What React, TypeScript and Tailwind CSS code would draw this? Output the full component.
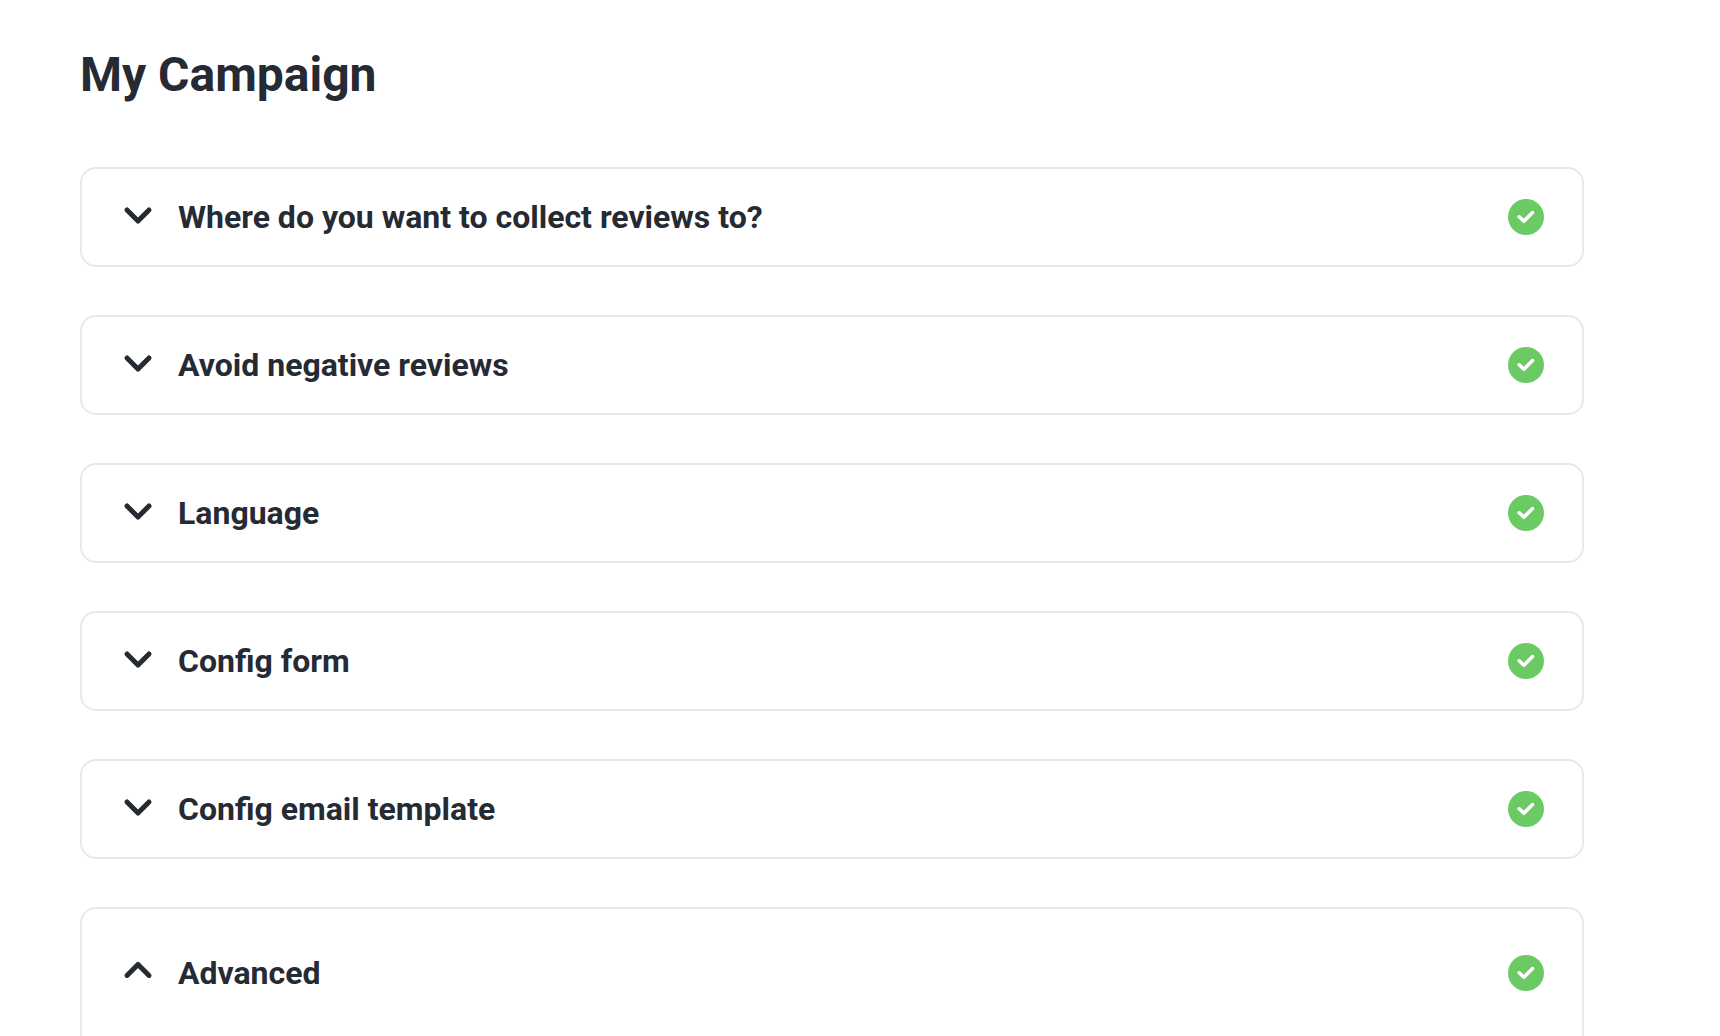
import { FC, useState } from 'react';

const sections = [
  'Where do you want to collect reviews to?',
  'Avoid negative reviews',
  'Language',
  'Config form',
  'Config email template',
  'Advanced',
];

const Chevron: FC<{ open: boolean }> = ({ open }) => (
  <svg
    viewBox="0 0 32 32"
    className="w-8 h-8 shrink-0"
    fill="none"
    stroke="currentColor"
    strokeWidth="5"
    strokeLinecap="round"
    strokeLinejoin="round"
    aria-hidden="true"
  >
    <path d={open ? 'M5 18.4 16 7.4 27 18.4' : 'M5 9 16 20 27 9'} />
  </svg>
);

const DoneIcon: FC = () => (
  <svg viewBox="0 0 40 40" className="w-10 h-10 shrink-0" fill="none" role="img" aria-label="Completed">
    <circle cx="20" cy="20" r="18" fill="#6bca64" />
    <path d="M13.2 19.8 17.9 24.2 26.5 15.6" stroke="#fff" strokeWidth="3.6" strokeLinecap="round" strokeLinejoin="round" />
  </svg>
);

type SectionProps = {
  title: string;
  open: boolean;
  onToggle: () => void;
};

const Section: FC<SectionProps> = ({ title, open, onToggle }) => (
  <section
    className={
      open
        ? 'grow border-2 border-b-0 border-[#e8e8e8] rounded-t-2xl'
        : 'border-2 border-[#e8e8e8] rounded-2xl'
    }
  >
    <h2>
      <button
        type="button"
        aria-expanded={open}
        onClick={onToggle}
        className={
          open
            ? 'flex w-full items-center gap-6 pl-10 pr-9 pt-11 pb-7 text-left cursor-pointer'
            : 'flex w-full items-center gap-6 pl-10 pr-9 py-7 text-left cursor-pointer'
        }
      >
        <Chevron open={open} />
        <span className="grow text-[32px] leading-10 font-bold">{title}</span>
        <DoneIcon />
      </button>
    </h2>
  </section>
);

const App: FC = () => {
  const [openSection, setOpenSection] = useState('Advanced');

  return (
    <main className="flex min-h-screen flex-col bg-white pt-[47px] pl-20 pr-[136px] font-['Roboto',sans-serif] text-[#252a33]">
      <h1 className="text-[48px] leading-14 font-bold">My Campaign</h1>
      <div className="mt-16 flex grow flex-col gap-12">
        {sections.map((title) => (
          <Section
            key={title}
            title={title}
            open={openSection === title}
            onToggle={() => setOpenSection(openSection === title ? '' : title)}
          />
        ))}
      </div>
    </main>
  );
};

export default App;
